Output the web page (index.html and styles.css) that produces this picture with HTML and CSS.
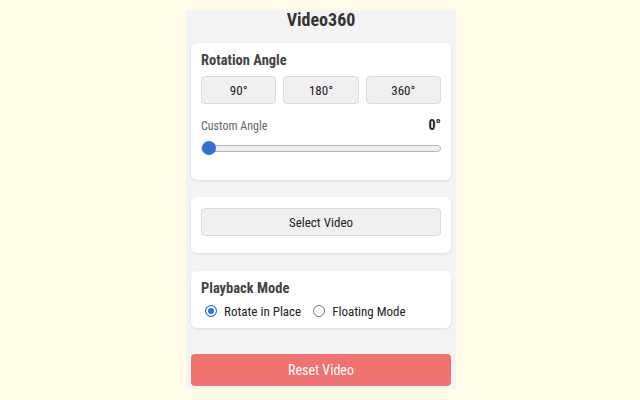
FILE: index.html
```html
<!DOCTYPE html>
<html lang="en">
<head>
<meta charset="utf-8">
<title>Video360</title>
<link rel="stylesheet" href="styles.css">
</head>
<body>
<div class="panel">
  <h1 class="title">Video360</h1>

  <section class="card card-rotation">
    <h2 class="card-title">Rotation Angle</h2>
    <div class="angle-buttons">
      <button class="btn">90°</button>
      <button class="btn">180°</button>
      <button class="btn">360°</button>
    </div>
    <div class="custom-row">
      <span class="custom-label">Custom Angle</span>
      <span class="custom-value">0°</span>
    </div>
    <div class="slider-wrap">
      <input class="slider" type="range" min="0" max="360" value="0">
    </div>
  </section>

  <section class="card card-select">
    <button class="btn btn-wide">Select Video</button>
  </section>

  <section class="card card-mode">
    <h2 class="card-title">Playback Mode</h2>
    <div class="radio-row">
      <label class="radio-label"><input class="radio" type="radio" name="mode" checked><span>Rotate in Place</span></label>
      <label class="radio-label"><input class="radio" type="radio" name="mode"><span>Floating Mode</span></label>
    </div>
  </section>

  <button class="reset">Reset Video</button>
</div>
</body>
</html>
```
FILE: styles.css
```css
* { box-sizing: border-box; }

body {
  margin: 0;
  padding-left: 2px;
  background: #fffde8;
  font-family: "Roboto Condensed", "Liberation Sans Narrow", "Liberation Sans", Arial, sans-serif;
  color: #222;
}

.panel {
  width: 270px;
  margin: 10px auto 0;
  padding: 0 5px 3px;
  background: #f4f4f4;
  display: flex;
  flex-direction: column;
}

.title {
  margin: 0;
  font-size: 18px;
  line-height: 20px;
  font-weight: bold;
  text-align: center;
  color: #333;
}

.card {
  background: #fff;
  border-radius: 6px;
  box-shadow: 0 1px 3px rgba(0, 0, 0, 0.1);
  padding: 9px 10px 10px;
}

.card-rotation { margin-top: 13px; }
.card-select { margin-top: 17px; padding: 11px 10px 17px; }
.card-mode { margin-top: 18px; padding-bottom: 7px; }

.card-title {
  margin: 0;
  font-size: 14.5px;
  line-height: 17px;
  font-weight: bold;
  color: #444;
}

.angle-buttons {
  margin-top: 7px;
  display: grid;
  grid-template-columns: repeat(3, 1fr);
  gap: 7px;
}

.btn {
  height: 28px;
  background: #f0f0f0;
  border: 1px solid #dadada;
  border-radius: 4px;
  font-family: inherit;
  font-size: 13px;
  color: #222;
  padding: 0;
}

.btn-wide { width: 100%; display: block; }

.custom-row {
  margin-top: 13px;
  display: flex;
  justify-content: space-between;
  align-items: baseline;
  line-height: 16px;
}

.custom-label {
  font-size: 12px;
  color: #666;
}

.custom-value {
  font-size: 14px;
  font-weight: bold;
  color: #222;
}

.slider-wrap {
  margin-top: 7px;
  margin-bottom: 15px;
  height: 14px;
  display: flex;
  align-items: center;
}

.slider {
  -webkit-appearance: none;
  appearance: none;
  width: 100%;
  height: 14px;
  margin: 0;
  background: transparent;
}

.slider::-webkit-slider-runnable-track {
  height: 7px;
  background: #efefef;
  border: 1px solid #b5b5b5;
  border-radius: 4px;
}

.slider::-webkit-slider-thumb {
  -webkit-appearance: none;
  appearance: none;
  width: 14px;
  height: 14px;
  margin-top: -4.5px;
  border-radius: 50%;
  background: #2f72d2;
  border: none;
}

.radio-row {
  margin-top: 4px;
  height: 20px;
  display: flex;
  align-items: center;
  gap: 12px;
  padding-left: 4px;
}

.radio-label {
  display: flex;
  align-items: center;
  gap: 7px;
  font-size: 13px;
  color: #222;
}

.radio {
  -webkit-appearance: none;
  appearance: none;
  margin: 0;
  width: 12px;
  height: 12px;
  border-radius: 50%;
  border: 1px solid #767676;
  background: #fff;
}

.radio:checked {
  border-color: #2f72d2;
  background: #2f72d2;
  box-shadow: inset 0 0 0 2px #fff;
}

.reset {
  margin-top: 26px;
  height: 32px;
  width: 100%;
  background: #ef7370;
  color: #fff;
  border: none;
  border-radius: 4px;
  font-family: inherit;
  font-size: 14px;
}
```
